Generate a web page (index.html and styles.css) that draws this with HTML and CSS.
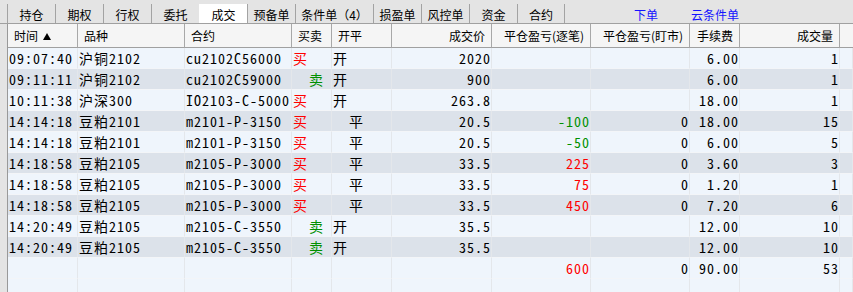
FILE: index.html
```html
<!DOCTYPE html>
<html lang="zh-CN">

<head>
    <meta charset="UTF-8">
    <meta name="viewport" content="width=device-width, initial-scale=1.0">
    <title>成交</title>
    <link rel="stylesheet" href="styles.css">
</head>

<body>
    <div class="tabbar">
        <div class="tab">持仓</div>
        <div class="tab">期权</div>
        <div class="tab">行权</div>
        <div class="tab">委托</div>
        <div class="tab active">成交</div>
        <div class="tab">预备单</div>
        <div class="tab wide">条件单（4）</div>
        <div class="tab">损盈单</div>
        <div class="tab">风控单</div>
        <div class="tab">资金</div>
        <div class="tab last">合约</div>
        <a class="action order">下单</a>
        <a class="action cloud">云条件单</a>
    </div>

    <div class="main">
        <div class="gutter"></div>
        <div class="grid">
            <div class="row head">
                <div class="h">时间<span class="sort"></span></div>
                <div class="h">品种</div>
                <div class="h">合约</div>
                <div class="h">买卖</div>
                <div class="h">开平</div>
                <div class="h num">成交价</div>
                <div class="h num">平仓盈亏(逐笔)</div>
                <div class="h num">平仓盈亏(盯市)</div>
                <div class="h num">手续费</div>
                <div class="h num">成交量</div>
                <div class="h"></div>
            </div>

            <div class="row">
                <div class="c">09:07:40</div>
                <div class="c">沪铜2102</div>
                <div class="c">cu2102C56000</div>
                <div class="c buy">买</div>
                <div class="c">开</div>
                <div class="c num">2020</div>
                <div class="c num"></div>
                <div class="c num"></div>
                <div class="c num">6.00</div>
                <div class="c num">1</div>
                <div class="c"></div>
            </div>
            <div class="row alt">
                <div class="c">09:11:11</div>
                <div class="c">沪铜2102</div>
                <div class="c">cu2102C59000</div>
                <div class="c sell">  卖</div>
                <div class="c">开</div>
                <div class="c num">900</div>
                <div class="c num"></div>
                <div class="c num"></div>
                <div class="c num">6.00</div>
                <div class="c num">1</div>
                <div class="c"></div>
            </div>
            <div class="row">
                <div class="c">10:11:38</div>
                <div class="c">沪深300</div>
                <div class="c">IO2103-C-5000</div>
                <div class="c buy">买</div>
                <div class="c">开</div>
                <div class="c num">263.8</div>
                <div class="c num"></div>
                <div class="c num"></div>
                <div class="c num">18.00</div>
                <div class="c num">1</div>
                <div class="c"></div>
            </div>
            <div class="row alt">
                <div class="c">14:14:18</div>
                <div class="c">豆粕2101</div>
                <div class="c">m2101-P-3150</div>
                <div class="c buy">买</div>
                <div class="c">  平</div>
                <div class="c num">20.5</div>
                <div class="c num loss">-100</div>
                <div class="c num">0</div>
                <div class="c num">18.00</div>
                <div class="c num">15</div>
                <div class="c"></div>
            </div>
            <div class="row">
                <div class="c">14:14:18</div>
                <div class="c">豆粕2101</div>
                <div class="c">m2101-P-3150</div>
                <div class="c buy">买</div>
                <div class="c">  平</div>
                <div class="c num">20.5</div>
                <div class="c num loss">-50</div>
                <div class="c num">0</div>
                <div class="c num">6.00</div>
                <div class="c num">5</div>
                <div class="c"></div>
            </div>
            <div class="row alt">
                <div class="c">14:18:58</div>
                <div class="c">豆粕2105</div>
                <div class="c">m2105-P-3000</div>
                <div class="c buy">买</div>
                <div class="c">  平</div>
                <div class="c num">33.5</div>
                <div class="c num gain">225</div>
                <div class="c num">0</div>
                <div class="c num">3.60</div>
                <div class="c num">3</div>
                <div class="c"></div>
            </div>
            <div class="row">
                <div class="c">14:18:58</div>
                <div class="c">豆粕2105</div>
                <div class="c">m2105-P-3000</div>
                <div class="c buy">买</div>
                <div class="c">  平</div>
                <div class="c num">33.5</div>
                <div class="c num gain">75</div>
                <div class="c num">0</div>
                <div class="c num">1.20</div>
                <div class="c num">1</div>
                <div class="c"></div>
            </div>
            <div class="row alt">
                <div class="c">14:18:58</div>
                <div class="c">豆粕2105</div>
                <div class="c">m2105-P-3000</div>
                <div class="c buy">买</div>
                <div class="c">  平</div>
                <div class="c num">33.5</div>
                <div class="c num gain">450</div>
                <div class="c num">0</div>
                <div class="c num">7.20</div>
                <div class="c num">6</div>
                <div class="c"></div>
            </div>
            <div class="row">
                <div class="c">14:20:49</div>
                <div class="c">豆粕2105</div>
                <div class="c">m2105-C-3550</div>
                <div class="c sell">  卖</div>
                <div class="c">开</div>
                <div class="c num">35.5</div>
                <div class="c num"></div>
                <div class="c num"></div>
                <div class="c num">12.00</div>
                <div class="c num">10</div>
                <div class="c"></div>
            </div>
            <div class="row alt">
                <div class="c">14:20:49</div>
                <div class="c">豆粕2105</div>
                <div class="c">m2105-C-3550</div>
                <div class="c sell">  卖</div>
                <div class="c">开</div>
                <div class="c num">35.5</div>
                <div class="c num"></div>
                <div class="c num"></div>
                <div class="c num">12.00</div>
                <div class="c num">10</div>
                <div class="c"></div>
            </div>

            <!-- totals -->
            <div class="row">
                <div class="c"></div>
                <div class="c"></div>
                <div class="c"></div>
                <div class="c"></div>
                <div class="c"></div>
                <div class="c num"></div>
                <div class="c num gain">600</div>
                <div class="c num">0</div>
                <div class="c num">90.00</div>
                <div class="c num">53</div>
                <div class="c"></div>
            </div>
            <div class="row">
                <div class="c"></div>
                <div class="c"></div>
                <div class="c"></div>
                <div class="c"></div>
                <div class="c"></div>
                <div class="c"></div>
                <div class="c"></div>
                <div class="c"></div>
                <div class="c"></div>
                <div class="c"></div>
                <div class="c"></div>
            </div>
        </div>
    </div>
</body>

</html>
```

FILE: styles.css
```css
body {
    margin: 0;
    font-family: "Noto Sans CJK SC", sans-serif;
    font-size: 12px;
    color: #000;
    background: #eff5fc;
    overflow: hidden;
}

.tabbar {
    display: flex;
    align-items: flex-end;
    height: 23px;
    padding-left: 7px;
    background: #e4e4e4;
    border-bottom: 1px solid #a0a0a0;
}

.tab {
    box-sizing: border-box;
    width: 48px;
    height: 19px;
    padding-top: 2px;
    line-height: 17px;
    text-align: center;
    border-left: 1px solid #a3a3a3;
    white-space: nowrap;
}

.tab.wide {
    width: 78px;
}

.tab.last {
    border-right: 1px solid #a3a3a3;
}

.tab.active {
    background: #fff;
    border-left-color: #fff;
}

.action {
    height: 19px;
    padding-top: 2px;
    line-height: 17px;
    color: #1414ff;
    box-sizing: border-box;
}

.action.order {
    margin-left: 69px;
}

.action.cloud {
    margin-left: 33px;
}

.main {
    display: flex;
}

.gutter {
    width: 7px;
    background: #e4e4e4;
    border-right: 1px solid #999;
}

.grid {
    flex: 1;
}

.row {
    display: grid;
    grid-template-columns: 70px 107px 107px 40px 60px 100px 99px 99px 50px 100px 1fr;
    background: #eff5fc;
}

.row.alt {
    background: #dce2ea;
}

.row.head {
    background: #f5f5f5;
}

.h {
    box-sizing: border-box;
    height: 24px;
    padding: 0 6px;
    line-height: 23px;
    border-right: 1px solid #a8a8a8;
    border-bottom: 1px solid #a0a0a0;
    white-space: nowrap;
}

.h:last-child {
    border-right: 0;
}

.h.num {
    text-align: right;
}

.sort {
    display: inline-block;
    margin-left: 5px;
    border-left: 4px solid transparent;
    border-right: 4px solid transparent;
    border-bottom: 7px solid #000;
    vertical-align: 1px;
}

/* 14px mono + 1px spacing keeps the 8px half-width cell of the original */
.c {
    box-sizing: border-box;
    height: 21px;
    padding: 1px 0 0 1px;
    font-family: "Noto Sans Mono CJK SC", "Liberation Mono", monospace;
    font-size: 14px;
    letter-spacing: 1px;
    line-height: 19px;
    border-right: 1px solid #e4e7eb;
    border-bottom: 1px solid #f3f5f8;
    white-space: pre;
}

.c.num {
    padding-left: 0;
    text-align: right;
}

.buy,
.gain {
    color: #f00;
}

.sell,
.loss {
    color: #009000;
}
```
